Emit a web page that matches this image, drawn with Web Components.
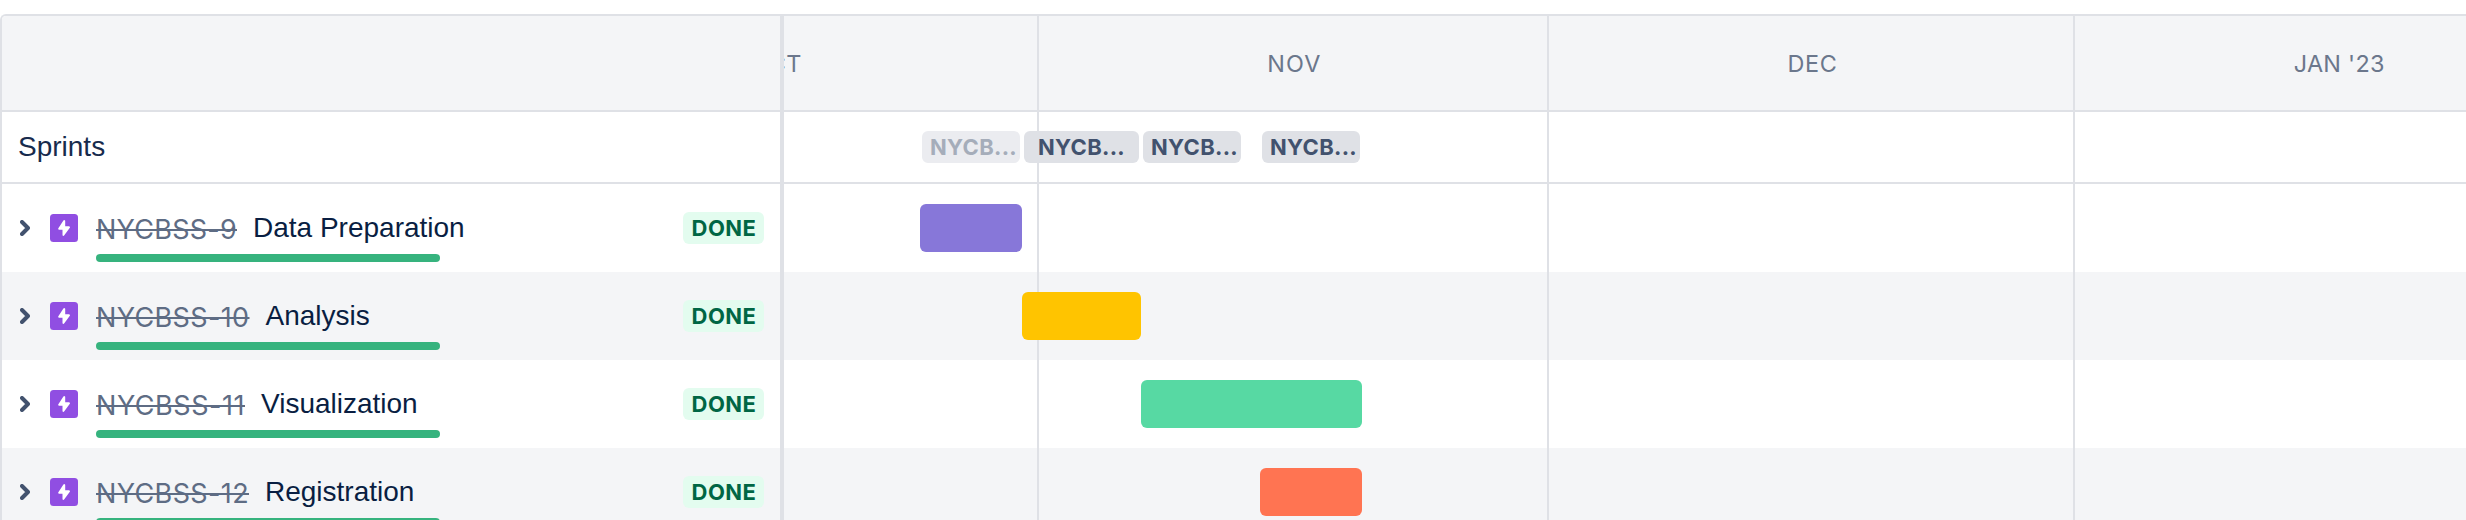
<!DOCTYPE html>
<html lang="en">
<head>
<meta charset="utf-8">
<title>Roadmap</title>
<style>
  body { margin: 0; background: #fff; font-family: "Liberation Sans", Arial, sans-serif; color: #172b4d; }
</style>
</head>
<body>
<road-map>
  <epic-row slot="epics" key="NYCBSS-9" key-width="141">Data Preparation</epic-row>
  <epic-row slot="epics" key="NYCBSS-10" key-width="153.5" striped>Analysis</epic-row>
  <epic-row slot="epics" key="NYCBSS-11" key-width="149">Visualization</epic-row>
  <epic-row slot="epics" key="NYCBSS-12" key-width="153" striped>Registration</epic-row>

  <month-cell slot="months" days="31" text-width="51">OCT</month-cell>
  <month-cell slot="months" days="30" text-width="54">NOV</month-cell>
  <month-cell slot="months" days="31" text-width="50">DEC</month-cell>
  <month-cell slot="months" days="31" text-width="91">JAN '23</month-cell>

  <sprint-chip slot="sprints" style="margin-left:138px;width:98px" past>NYCB...</sprint-chip>
  <sprint-chip slot="sprints" style="margin-left:4px;width:115px" wide>NYCB...</sprint-chip>
  <sprint-chip slot="sprints" style="margin-left:4px;width:97.5px">NYCB...</sprint-chip>
  <sprint-chip slot="sprints" style="margin-left:21.5px;width:97.5px">NYCB...</sprint-chip>

  <time-bar slot="bars" start="136" length="102" color="#8777d9"></time-bar>
  <time-bar slot="bars" start="238" length="119" color="#ffc400" striped></time-bar>
  <time-bar slot="bars" start="357" length="220.5" color="#57d9a3"></time-bar>
  <time-bar slot="bars" start="476" length="101.5" color="#ff7452" striped></time-bar>
</road-map>

<script>
const define = (name, html, setup) => {
  const template = document.createElement('template');
  template.innerHTML = html;
  customElements.define(name, class extends HTMLElement {
    connectedCallback() {
      if (this.shadowRoot) return;
      const root = this.attachShadow({ mode: 'open' });
      root.append(template.content.cloneNode(true));
      if (setup) setup(this, root);
    }
  });
};

// Spreads the letters of an element so that the run takes a given width.
const track = (el, width, count) => {
  const natural = el.getBoundingClientRect().width;
  if (natural) el.style.letterSpacing = (width - natural) / count + 'px';
};

define('road-map', `
  <style>
    :host { display: block; padding-top: 14px; height: 506px; overflow: hidden; }
    .frame { display: grid; grid-template-columns: 778px 4px 1fr; height: 530px; box-sizing: border-box;
      border: 2px solid #dfe1e6; border-width: 2px 0 0 2px; border-radius: 6px 0 0 0; overflow: hidden; }
    .head { height: 94px; background: #f4f5f7; border-bottom: 2px solid #dfe1e6; }
    .sprints { height: 70px; border-bottom: 2px solid #dfe1e6; display: flex; align-items: center; }
    .side .sprints { padding-left: 16px; font-size: 28px; }
    .side .sprints span { margin-top: -1px; }
    .divider { background: #dfe1e6; }
    .time { position: relative; overflow: hidden; z-index: 0; }
    .months { display: flex; margin-left: -273.7px; width: 2100px; height: 100%; }
    .lines { position: absolute; inset: 0; z-index: 1; display: flex; margin-left: -273.7px; width: 2100px; }
    .lines i { flex: none; box-sizing: border-box; border-left: 2px solid #dfe1e6; width: 526.7px; }
    .lines i:nth-child(2) { width: 509.7px; }
  </style>
  <div class="frame">
    <div class="side">
      <div class="head"></div>
      <div class="sprints"><span>Sprints</span></div>
      <slot name="epics"></slot>
    </div>
    <div class="divider"></div>
    <div class="time">
      <div class="lines"><i></i><i></i><i></i><i></i></div>
      <div class="head"><div class="months"><slot name="months"></slot></div></div>
      <div class="sprints"><slot name="sprints"></slot></div>
      <slot name="bars"></slot>
    </div>
  </div>`);

define('month-cell', `
  <style>
    :host { display: flex; flex: none; box-sizing: border-box; align-items: center; justify-content: center;
      padding: 1px 0 0 5px; font: 400 23.4px Inter, sans-serif; color: #6b778c; }
  </style>
  <span><slot></slot></span>`, (host, root) => {
  host.style.width = host.getAttribute('days') * 16.99 + 'px';
  track(root.querySelector('span'), +host.getAttribute('text-width'), host.textContent.length);
});

define('status-tag', `
  <style>
    :host { display: flex; flex: none; box-sizing: border-box; align-items: center; width: 81px; height: 32px; padding-left: 8.5px;
      border-radius: 6px; background: #e3fcef; color: #006644; font: 700 22px/32px Inter, sans-serif; }
  </style>
  <span><slot></slot></span>`, (host, root) => {
  track(root.querySelector('span'), 65, 4);
});

define('epic-icon', `
  <style>:host { display: block; width: 28px; height: 28px; } svg { display: block; }</style>
  <svg width="28" height="28" viewBox="0 0 28 28">
    <rect width="28" height="28" rx="3.5" fill="#904ee2"/>
    <path d="M13.4 6.4 8.2 14.6Q7.9 15.7 9 15.8H12.5V21.2Q13.2 22.6 14.3 21.3L20 13.5Q20.2 12.4 19 12.2H15.2V6.8Q14.4 5.4 13.4 6.4Z" fill="#fff"/>
  </svg>`);

define('epic-row', `
  <style>
    :host { display: block; height: 88px; box-sizing: border-box; padding: 24px 16px 0 18px; background: #fff; }
    :host([striped]) { background: #f4f5f7; }
    .line { display: flex; align-items: center; height: 40px; }
    .chevron { display: block; flex: none; margin-right: 20px; }
    epic-icon { flex: none; margin-right: 18px; }
    .key { font: 400 27px/40px Inter, sans-serif; color: #5e6c84; white-space: nowrap; margin-top: 4px;
      text-decoration: line-through; text-decoration-thickness: 2px; }
    .title { font-size: 28px; line-height: 40px; color: #091e42; margin-left: 16px; flex: 1; white-space: nowrap; margin-top: -1px; }
    .progress { margin: 6px 0 0 76px; width: 344px; height: 8px; border-radius: 4px; background: #36b37e; }
  </style>
  <div class="line">
    <svg class="chevron" width="10" height="16" viewBox="0 0 10 16"><path d="M2 2 8 8 2 14" fill="none" stroke="#42526e" stroke-width="4" stroke-linecap="round" stroke-linejoin="round"/></svg>
    <epic-icon></epic-icon>
    <span class="key"></span>
    <span class="title"><slot></slot></span>
    <status-tag>DONE</status-tag>
  </div>
  <div class="progress"></div>`, (host, root) => {
  const key = root.querySelector('.key');
  key.textContent = host.getAttribute('key');
  track(key, +host.getAttribute('key-width'), key.textContent.length);
});

define('sprint-chip', `
  <style>
    :host { display: flex; flex: none; box-sizing: border-box; align-items: center; height: 32px; padding-left: 8px;
      border-radius: 6px; background: #dfe1e6; color: #42526e; font: 700 22px/32px Inter, sans-serif;
      position: relative; z-index: 2; }
    :host([wide]) { padding-left: 14px; }
    :host([past]) { background: #ebecf0; color: #a5adba; }
  </style>
  <span><slot></slot></span>`, (host, root) => {
  track(root.querySelector('span'), 87, 7);
});

define('time-bar', `
  <style>
    :host { display: block; height: 88px; box-sizing: border-box; padding-top: 20px; }
    :host([striped]) { background: #f4f5f7; }
    div { height: 48px; border-radius: 6px; position: relative; z-index: 2; }
  </style>
  <div></div>`, (host, root) => {
  const bar = root.querySelector('div');
  bar.style.marginLeft = host.getAttribute('start') + 'px';
  bar.style.width = host.getAttribute('length') + 'px';
  bar.style.background = host.getAttribute('color');
});
</script>
</body>
</html>
